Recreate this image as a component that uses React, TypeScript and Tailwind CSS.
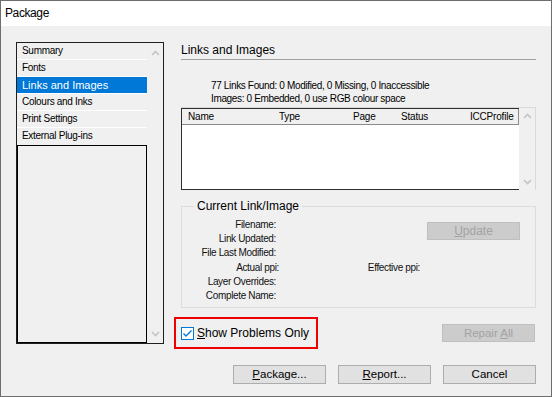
import type { ReactNode } from "react";

const items = [
  "Summary",
  "Fonts",
  "Links and Images",
  "Colours and Inks",
  "Print Settings",
  "External Plug-ins",
];

const labels = [
  "Filename:",
  "Link Updated:",
  "File Last Modified:",
  "Actual ppi:",
  "Layer Overrides:",
  "Complete Name:",
];

function Chevron({ down = false }: { down?: boolean }) {
  return (
    <svg width="9" height="6" viewBox="0 0 9 6" className="text-[#c4c4c4]">
      <path
        d={down ? "M1 1 L4.5 4.5 L8 1" : "M1 5 L4.5 1.5 L8 5"}
        fill="none"
        stroke="currentColor"
        strokeWidth="1.6"
      />
    </svg>
  );
}

function Button({
  children,
  disabled = false,
  className = "",
}: {
  children: ReactNode;
  disabled?: boolean;
  className?: string;
}) {
  return (
    <button
      type="button"
      className={
        "flex w-[93px] items-center justify-center border " +
        (disabled
          ? "border-[#bfbfbf] bg-[#cccccc] text-[#a3a3a3] "
          : "border-[#adadad] bg-[#e1e1e1] text-black ") +
        className
      }
    >
      {children}
    </button>
  );
}

function CheckBox() {
  return (
    <svg width="13" height="13" viewBox="0 0 13 13">
      <rect x="0.5" y="0.5" width="12" height="12" fill="white" stroke="#0078d7" />
      <path d="M2.5 6.5 L5 9 L10.5 3.5" fill="none" stroke="#0078d7" strokeWidth="1.4" />
    </svg>
  );
}

export default function App() {
  return (
    <div className="flex h-[397px] w-[552px] flex-col border border-[#6e6e6e] bg-[#f0f0f0] font-['Liberation_Sans',Arial,sans-serif] text-black">
      <div className="h-[25px] bg-white pl-[4px] text-[12px] leading-[25px] tracking-[-0.4px]">
        Package
      </div>

      <div className="flex gap-[17px] px-[15px] pt-[16px]">
        {/* section list */}
        <div className="flex h-[302px] w-[148px] shrink-0 border border-[#1f1f1f]">
          <div className="flex w-[130px] flex-col">
            {items.map((item, i) => (
              <div
                key={item}
                className={
                  "h-[17px] pl-[5px] leading-[16px] " +
                  (i < items.length - 1 ? "border-b border-white " : "h-[16px] ") +
                  (item === "Links and Images"
                    ? "bg-[#0078d7] text-[11px] text-white"
                    : "text-[10px] tracking-[-0.3px]")
                }
              >
                {item}
              </div>
            ))}
            <div className="flex-1 border border-black" />
          </div>
          <div className="flex w-[16px] flex-col items-center justify-between pt-[7px] pb-[6px]">
            <Chevron />
            <Chevron down />
          </div>
        </div>

        {/* right panel */}
        <div className="flex flex-1 flex-col">
          <div className="h-[18px] border-b border-[#a0a0a0] text-[12px] leading-[17px]">
            Links and Images
          </div>

          <div className="mt-[19px] pl-[30px] text-[10px] leading-[13px] tracking-[-0.35px]">
            <div>77 Links Found: 0 Modified, 0 Missing, 0 Inaccessible</div>
            <div>Images: 0 Embedded, 0 use RGB colour space</div>
          </div>

          <div className="mt-[2px] flex h-[83px] border-t border-r border-[#d9d9d9]">
            <div className="flex w-[338px] flex-col border-t border-b border-l border-[#2e2e2e] bg-white">
              <div className="flex h-[16px] border-r border-b border-[#8a8a8a] bg-[#f0f0f0] pl-[6px] text-[10px] leading-[15px] tracking-[-0.2px]">
                <span className="w-[91px]">Name</span>
                <span className="w-[74px]">Type</span>
                <span className="w-[48px]">Page</span>
                <span className="w-[69px]">Status</span>
                <span>ICCProfile</span>
              </div>
            </div>
            <div className="flex flex-1 flex-col items-center justify-between pt-[5px] pb-[5px]">
              <Chevron />
              <Chevron down />
            </div>
          </div>

          <fieldset className="mt-[8px] border border-[#dcdcdc] pb-[4px]">
            <legend className="ml-[12px] px-[3px] text-[12px] leading-[17px]">
              Current Link/Image
            </legend>
            <div className="flex items-start pt-[3px]">
              <div className="flex flex-col text-[10px] leading-[14.2px] tracking-[-0.35px] text-[#111]">
                {labels.map((label) => (
                  <div key={label} className="flex">
                    <span className={"text-right " + (label === "Actual ppi:" ? "w-[97px]" : "w-[94px]")}>
                      {label}
                    </span>
                    {label === "Actual ppi:" ? (
                      <span className="w-[141px] text-right">Effective ppi:</span>
                    ) : null}
                  </div>
                ))}
              </div>
              <Button disabled className="ml-auto mr-[15px] mt-[4px] h-[18px] text-[12px]">
                <span>
                  <span className="underline">U</span>pdate
                </span>
              </Button>
            </div>
          </fieldset>

          <div className="mt-[9px] flex items-start">
            <div className="-ml-[7px] flex h-[32px] w-[144px] items-center gap-[3px] border-2 border-[#f00000] pl-[5px] text-[12px]">
              <CheckBox />
              <span>
                <span className="underline">S</span>how Problems Only
              </span>
            </div>
            <Button disabled className="ml-auto mr-[1px] mt-[7px] h-[18px] text-[11.5px]">
              <span>
                Repair <span className="underline">A</span>ll
              </span>
            </Button>
          </div>
        </div>
      </div>

      <div className="mt-[16px] flex justify-end gap-[12px] pr-[15px] text-[11.5px]">
        <Button className="h-[19px]">
          <span>
            <span className="underline">P</span>ackage...
          </span>
        </Button>
        <Button className="h-[19px]">
          <span>
            <span className="underline">R</span>eport...
          </span>
        </Button>
        <Button className="h-[19px]">Cancel</Button>
      </div>
    </div>
  );
}
